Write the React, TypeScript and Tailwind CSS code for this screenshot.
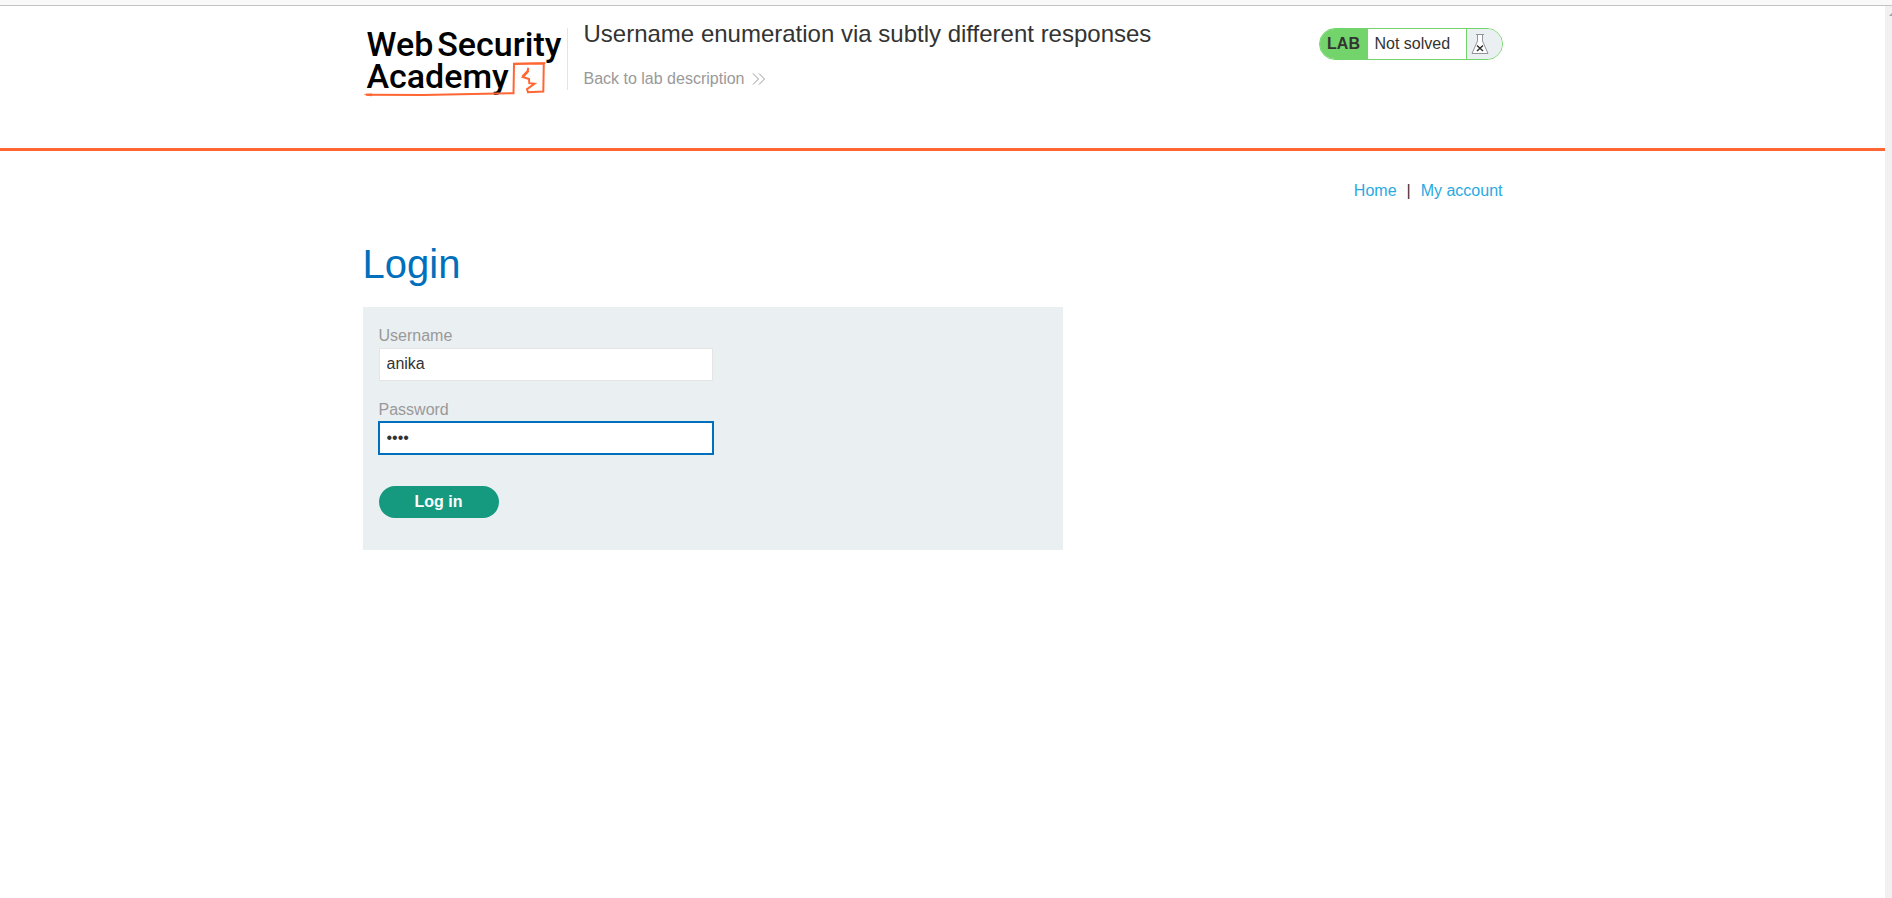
import React from "react";

function Logo() {
  return (
    <a href="#academy" aria-label="Web Security Academy" className="relative block h-[72px] w-[204px] text-black">
      <span className="flex flex-col pl-1 pt-0.5 font-[Roboto,sans-serif] text-[34px] font-medium leading-8">
        <span className="flex gap-1">
          <span>Web</span>
          <span>Security</span>
        </span>
        <span>Academy</span>
      </span>
      <svg viewBox="0 0 204 72" className="absolute inset-0 h-full w-full" fill="none" stroke="#ff6633" aria-hidden="true">
        <path d="M0.500 68 L9 67.500 V70.200 Q4 70.200 0.500 68Z" fill="#ff6633" stroke="none" />
        <path d="M3 68.800 L60 69 L150.500 67.200 L151 38 L180.800 37.500 L180.300 65.500 L165 66.300 L164 63.200 L171.500 57.700 L166.300 57.200 L166 53 L159.800 51 L164.500 46 L165.300 41.700" strokeWidth="2" />
        <path d="M150 37.500 L182.500 37" strokeWidth="1.500" />
        <path d="M159.500 50.500 L165.500 44.500" strokeWidth="2.400" />
      </svg>
    </a>
  );
}

function LabStatus() {
  return (
    <div className="flex h-8 w-[184px] overflow-hidden rounded-full border border-[#72d46b] bg-white leading-[30px]">
      <p className="w-12 bg-[#72d46b] text-center font-bold">LAB</p>
      <p className="flex-1 pl-[7px] leading-[29px]">Not solved</p>
      <span className="flex w-9 items-center border-l border-[#72d46b] bg-[#eaeff2] pl-1">
        <svg viewBox="0 0 18 22" className="h-[22px] w-[18px]" fill="none" aria-hidden="true">
          <path d="M6.500 1.500 V8 L1 20.500 H17 L11.500 8 V1.500" fill="#fff" stroke="#929497" />
          <path d="M5 1.500 H13" stroke="#929497" />
          <path d="M6 12.500 L12 18 M12 12.500 L6 18" stroke="#333332" strokeWidth="1.500" />
        </svg>
      </span>
    </div>
  );
}

export default function App() {
  return (
    <div className="flex min-h-screen flex-col bg-white font-['Liberation_Sans',Arial,sans-serif] text-base text-[#333332]">
      <div className="h-1.5 border-b border-[#c4c4c4] bg-[#f9f9f9]" />
      <div className="flex flex-1">
        <div className="min-w-0 flex-1">
          <header className="border-b-[3px] border-[#ff6633] pb-[50px] pt-5">
            <div className="mx-auto flex max-w-[1160px] items-start pr-5">
              <Logo />
              <div className="mt-0.5 h-[62px] border-l border-[#e4e4e4]" />
              <div className="flex-1 pl-4">
                <h2 className="-mt-2 text-2xl leading-8">Username enumeration via subtly different responses</h2>
                <a href="#description" className="mt-[17px] flex items-center gap-2 leading-6 text-[#999]">
                  Back to lab description
                  <svg viewBox="0 0 14 14" className="h-3.5 w-3.5" fill="none" stroke="#999" aria-hidden="true">
                    <path d="M1 1.500 L6.500 7 L1 12.500 M7 1.500 L12.500 7 L7 12.500" />
                  </svg>
                </a>
              </div>
              <div className="pt-0.5">
                <LabStatus />
              </div>
            </div>
          </header>
          <main className="mx-auto max-w-[1160px] pr-5">
            <nav className="flex justify-end gap-2.5 pt-7 leading-6">
              <a href="#home" className="text-[#29a9e1]">Home</a>
              <span>|</span>
              <a href="#account" className="text-[#29a9e1]">My account</a>
            </nav>
            <h1 className="mt-9 text-[40px] leading-[50px] text-[#0070bd]">Login</h1>
            <form className="mt-[18px] max-w-[700px] bg-[#eaeff2] px-4 pb-8 pt-[17px]" onSubmit={(e) => e.preventDefault()}>
              <label htmlFor="username" className="block leading-6 text-[#999]">Username</label>
              <input
                id="username"
                type="text"
                defaultValue="anika"
                className="block h-[33px] w-[334px] border border-[#e4e4e4] bg-white px-[7px] pb-0.5 outline-none"
              />
              <label htmlFor="password" className="mt-[17px] block leading-6 text-[#999]">Password</label>
              <input
                id="password"
                type="password"
                defaultValue="abcd"
                className="block h-8 w-[334px] bg-white px-2 outline-2 outline-offset-[-1px] outline-[#0070bd]"
              />
              <button type="submit" className="mt-8 block h-8 w-[120px] rounded-full bg-[#159a80] font-bold text-white">
                Log in
              </button>
            </form>
          </main>
        </div>
        <div className="w-[7px] overflow-hidden bg-[#f1f1f1] pl-1 pt-[7px]" aria-hidden="true">
          <svg viewBox="0 0 3 3" className="h-[3px] w-[3px]">
            <path d="M0 3 L3 0 V3Z" fill="#a3a3a3" />
          </svg>
        </div>
      </div>
    </div>
  );
}
